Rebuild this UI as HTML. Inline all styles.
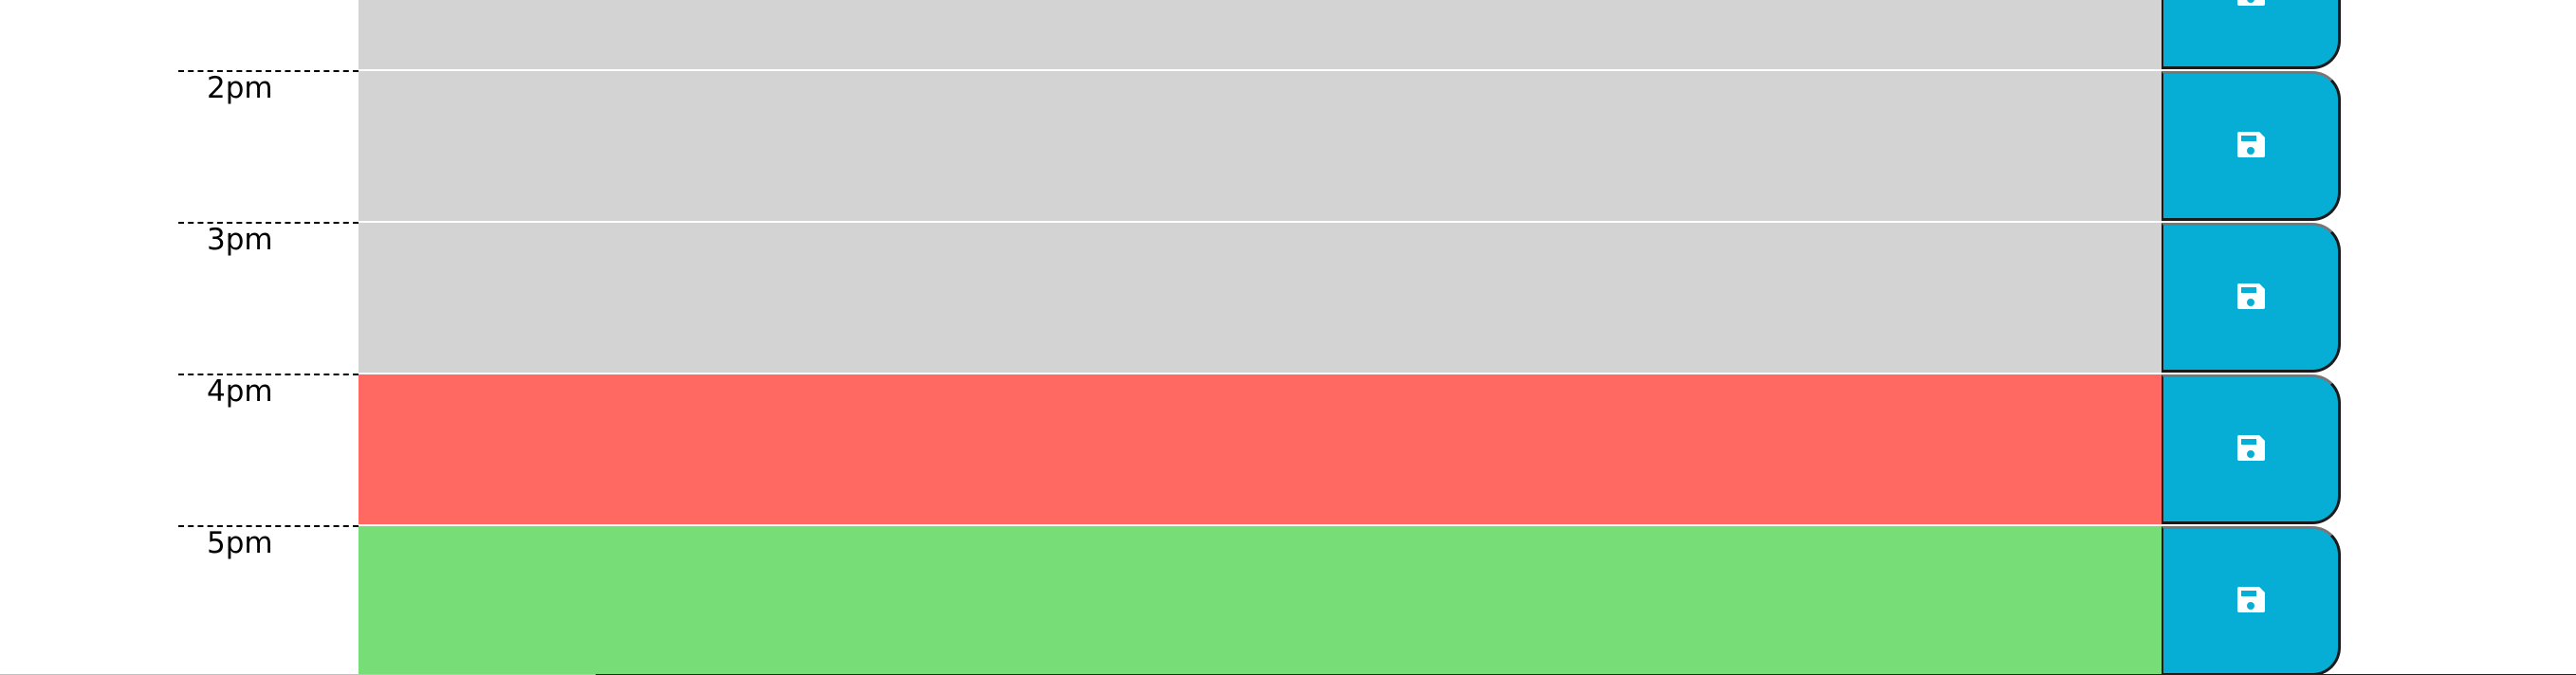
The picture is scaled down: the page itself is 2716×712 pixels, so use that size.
<!DOCTYPE html>
<html><head><style>
html,body{margin:0;padding:0;background:#fff;width:2716px;height:712px;overflow:hidden;position:relative;font-family:"DejaVu Sans","Liberation Sans",sans-serif}
.row{position:absolute;left:0;width:2716px;height:160px}
.dash{position:absolute;left:188px;width:190px;top:0;border-top:2px dashed #000}
.lab{position:absolute;left:218px;top:1px;font-size:31px;color:#000}
.ta{position:absolute;left:378px;width:1901px;top:1px;height:158px}
.btn{position:absolute;left:2279px;top:1px;width:184px;height:152px;background:#06aed5;border-top:3px solid #777;border-left:2px solid #1a1a1a;border-right:3px solid #1a1a1a;border-bottom:3px solid #1a1a1a;border-radius:0 30px 30px 0}
.btn svg{position:absolute;left:78px;top:61px}
</style></head><body>
<div class="row" style="top:-86px"><div class="ta" style="background:#d3d3d3"></div><div class="btn"><svg width="29" height="27" viewBox="0 0 29 27"><path d="M0 2Q0 0 2 0H23L29 6V25Q29 27 27 27H2Q0 27 0 25Z" fill="#fff"/><rect x="4" y="4" width="16" height="6" fill="#06aed5"/><circle cx="14" cy="20" r="4" fill="#06aed5"/></svg></div></div>
<div class="row" style="top:74px"><div class="dash"></div><div class="lab">2pm</div><div class="ta" style="background:#d3d3d3"></div><div class="btn"><svg width="29" height="27" viewBox="0 0 29 27"><path d="M0 2Q0 0 2 0H23L29 6V25Q29 27 27 27H2Q0 27 0 25Z" fill="#fff"/><rect x="4" y="4" width="16" height="6" fill="#06aed5"/><circle cx="14" cy="20" r="4" fill="#06aed5"/></svg></div></div>
<div class="row" style="top:234px"><div class="dash"></div><div class="lab">3pm</div><div class="ta" style="background:#d3d3d3"></div><div class="btn"><svg width="29" height="27" viewBox="0 0 29 27"><path d="M0 2Q0 0 2 0H23L29 6V25Q29 27 27 27H2Q0 27 0 25Z" fill="#fff"/><rect x="4" y="4" width="16" height="6" fill="#06aed5"/><circle cx="14" cy="20" r="4" fill="#06aed5"/></svg></div></div>
<div class="row" style="top:394px"><div class="dash"></div><div class="lab">4pm</div><div class="ta" style="background:#ff6961"></div><div class="btn"><svg width="29" height="27" viewBox="0 0 29 27"><path d="M0 2Q0 0 2 0H23L29 6V25Q29 27 27 27H2Q0 27 0 25Z" fill="#fff"/><rect x="4" y="4" width="16" height="6" fill="#06aed5"/><circle cx="14" cy="20" r="4" fill="#06aed5"/></svg></div></div>
<div class="row" style="top:554px"><div class="dash"></div><div class="lab">5pm</div><div class="ta" style="background:#77dd77"></div><div class="btn"><svg width="29" height="27" viewBox="0 0 29 27"><path d="M0 2Q0 0 2 0H23L29 6V25Q29 27 27 27H2Q0 27 0 25Z" fill="#fff"/><rect x="4" y="4" width="16" height="6" fill="#06aed5"/><circle cx="14" cy="20" r="4" fill="#06aed5"/></svg></div></div>
<div style="position:absolute;left:0;top:711px;width:628px;height:1px;background:#c0c0c0"></div>
<div style="position:absolute;left:628px;top:711px;width:2088px;height:1px;background:#222"></div>
</body></html>
